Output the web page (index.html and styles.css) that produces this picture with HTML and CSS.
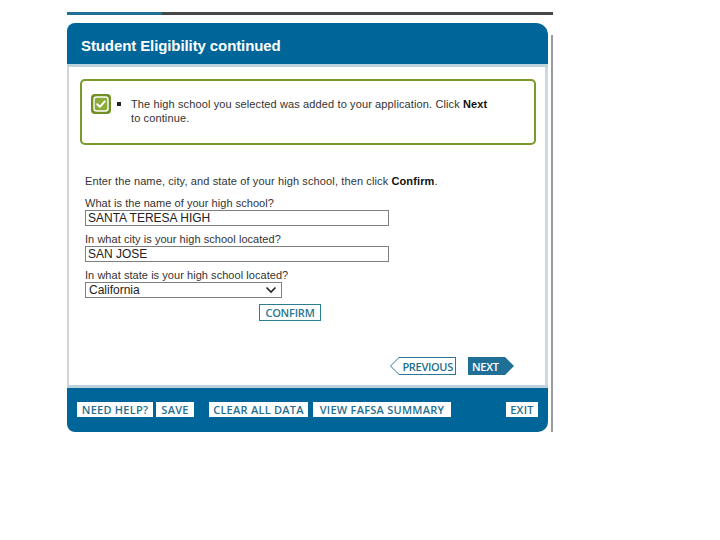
FILE: index.html
```html
<!DOCTYPE html>
<html>
<head>
<meta charset="utf-8">
<link rel="stylesheet" href="styles.css">
</head>
<body>
<div class="page">
  <div class="topline"><span class="tl-blue"></span><span class="tl-dark"></span></div>
  <div class="frame">
    <div class="panel">
      <div class="header"><h1>Student Eligibility continued</h1></div>
      <div class="content">
        <div class="notice">
          <svg class="check" width="20" height="20" viewBox="0 0 20 20">
            <rect x="0" y="0" width="20" height="20" rx="4" fill="#6f8f25"/>
            <rect x="3" y="3" width="14" height="14" rx="2.5" fill="#8bab3b" stroke="#ffffff" stroke-width="1.4"/>
            <path d="M6.2 10.2 L8.9 12.8 L13.8 7.4" fill="none" stroke="#ffffff" stroke-width="2" stroke-linecap="round" stroke-linejoin="round"/>
          </svg>
          <span class="bullet"></span>
          <p class="notice-text">The high school you selected was added to your application. Click <b>Next</b><br>to continue.</p>
        </div>
        <div class="form">
          <p class="intro">Enter the name, city, and state of your high school, then click <b>Confirm</b>.</p>
          <label class="lbl first">What is the name of your high school?</label>
          <input class="field" type="text" value="SANTA TERESA HIGH">
          <label class="lbl">In what city is your high school located?</label>
          <input class="field" type="text" value="SAN JOSE">
          <label class="lbl">In what state is your high school located?</label>
          <div class="select"><span>California</span>
            <svg width="12" height="8" viewBox="0 0 12 8"><path d="M1.5 1.5 L6 6 L10.5 1.5" fill="none" stroke="#222" stroke-width="1.6"/></svg>
          </div>
          <button class="confirm">CONFIRM</button>
        </div>
        <div class="nav">
          <div class="prev"><span>PREVIOUS</span></div>
          <div class="next"><span>NEXT</span></div>
        </div>
      </div>
      <div class="footer">
        <span class="fbtn w-help">NEED HELP?</span>
        <span class="fbtn w-save">SAVE</span>
        <span class="fbtn w-clear">CLEAR ALL DATA</span>
        <span class="fbtn w-view">VIEW FAFSA SUMMARY</span>
        <span class="fbtn w-exit">EXIT</span>
      </div>
    </div>
    <div class="sideline"></div>
  </div>
</div>
</body>
</html>
```
FILE: styles.css
```css
html, body { margin: 0; padding: 0; background: #ffffff; }
body { font-family: "Liberation Sans", Arial, sans-serif; color: #333; }

.page { padding: 12px 0 0 67px; width: 486px; }

.topline { display: flex; height: 3px; }
.tl-blue { width: 95px; background: #1f6f96; }
.tl-dark { flex: 1; background: #474747; }

.frame { display: flex; margin-top: 8px; }
.panel { width: 481px; }
.sideline { width: 2px; background: #9a9a9a; margin: 12px 0 0 3px; }

.header {
  height: 41px;
  background: #006699;
  border-radius: 8px 12px 0 0;
  border-bottom: 3px solid #bcd3dc;
  display: flex;
  align-items: center;
}
.header h1 {
  margin: 3px 0 0 14px;
  font: bold 15px "Liberation Sans", Arial, sans-serif;
  color: #ffffff;
  letter-spacing: -0.1px;
}

.content {
  height: 318px;
  border-left: 2px solid #d4d4d4;
  border-right: 3px solid #c9dae2;
  background: #fff;
  display: flex;
  flex-direction: column;
}

.notice {
  margin: 12px 0 0 11px;
  width: 452px;
  height: 62px;
  border: 2px solid #7a9a2c;
  border-radius: 5px;
  display: flex;
  align-items: flex-start;
}
.check { margin: 13px 0 0 9px; flex: none; }
.bullet { width: 4px; height: 4px; background: #222; margin: 21px 0 0 6px; flex: none; }
.notice-text {
  margin: 16px 0 0 10px;
  font-size: 11px;
  line-height: 14px;
  letter-spacing: 0.12px;
  color: #333;
}
.notice-text b { color: #111; }

.form { display: flex; flex-direction: column; align-items: flex-start; padding-left: 16px; margin-top: 29px; }
.intro { margin: 0; font-size: 11px; line-height: 14px; letter-spacing: 0.12px; }
.intro b { color: #111; }
.lbl { display: block; font-size: 11px; line-height: 14px; margin-top: 6px; letter-spacing: 0.05px; }
.lbl.first { margin-top: 8px; }
.field {
  box-sizing: border-box;
  width: 304px;
  height: 16px;
  border: 1px solid #7f7f7f;
  padding: 0 2px;
  margin: 0;
  font: 12px "Liberation Sans", Arial, sans-serif;
  color: #222;
  outline: none;
}
.select {
  box-sizing: border-box;
  width: 197px;
  height: 16px;
  border: 1px solid #7f7f7f;
  display: flex;
  align-items: center;
  justify-content: space-between;
  padding: 0 4px 0 3px;
  font-size: 12px;
  color: #222;
}
.confirm {
  margin: 6px 0 0 174px;
  box-sizing: border-box;
  width: 62px;
  height: 17px;
  padding: 0;
  border: 1px solid #2c7d96;
  background: #fff;
  color: #2a7893;
  font: 600 11px "Open Sans", sans-serif;
  letter-spacing: -0.2px;
  line-height: 14px;
}

.nav { display: flex; margin: 36px 0 0 321px; gap: 12px; }
.prev {
  width: 66px; height: 18px; box-sizing: border-box; padding: 1px;
  background: #2a7893;
  clip-path: polygon(9px 0, 100% 0, 100% 100%, 9px 100%, 0 50%);
}
.prev span {
  display: flex; align-items: center; justify-content: flex-end;
  height: 100%; padding-right: 2px; box-sizing: border-box;
  background: #fff;
  clip-path: polygon(8px 0, 100% 0, 100% 100%, 8px 100%, 0 50%);
  color: #1f6f8f;
  font: 600 11px "Open Sans", sans-serif;
  letter-spacing: -0.3px;
}
.next {
  width: 46px; height: 18px; box-sizing: border-box;
  background: #1f6f96;
  clip-path: polygon(0 0, calc(100% - 9px) 0, 100% 50%, calc(100% - 9px) 100%, 0 100%);
  display: flex; align-items: center;
}
.next span {
  padding-left: 4px;
  color: #fff;
  font: 600 11px "Open Sans", sans-serif;
  letter-spacing: -0.3px;
}

.footer {
  height: 47px;
  background: #006699;
  border-top: 3px solid #bcd3dc;
  border-radius: 0 0 10px 8px;
  display: flex;
  align-items: flex-start;
  padding: 14px 0 0 10px;
  box-sizing: border-box;
}
.fbtn {
  background: #fff;
  color: #1f6f8f;
  font: 600 11px "Open Sans", sans-serif;
  letter-spacing: 0.25px;
  height: 15px;
  line-height: 15px;
  text-align: center;
  flex: none;
}
.w-help { width: 76px; }
.w-save { width: 38px; margin-left: 3px; }
.w-clear { width: 99px; margin-left: 15px; }
.w-view { width: 138px; margin-left: 5px; }
.w-exit { width: 32px; margin-left: auto; margin-right: 10px; }
```
